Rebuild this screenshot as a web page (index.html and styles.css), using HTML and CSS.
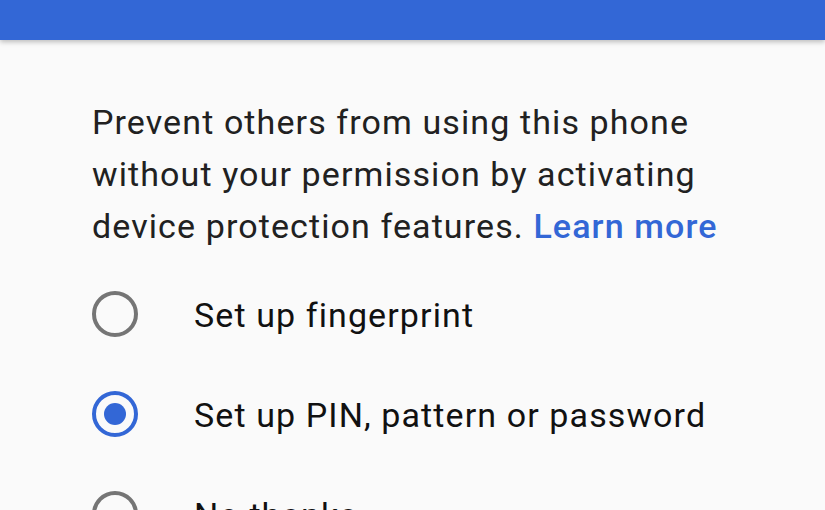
FILE: index.html
```html
<!DOCTYPE html>
<html lang="en">
<head>
    <meta charset="UTF-8">
    <meta name="viewport" content="width=device-width, initial-scale=1.0">
    <title>Device protection</title>
    <link rel="stylesheet" href="styles.css">
</head>
<body>

    <div class="header"></div>

    <div class="content">
        <p class="intro">
            Prevent others from using this phone<br>
            without your permission by activating<br>
            device protection features. <a href="#" class="link">Learn more</a>
        </p>

        <div class="options">
            <div class="option">
                <span class="radio"></span>
                <span class="label">Set up fingerprint</span>
            </div>
            <div class="option">
                <span class="radio checked"></span>
                <span class="label">Set up PIN, pattern or password</span>
            </div>
            <div class="option">
                <span class="radio"></span>
                <span class="label">No thanks</span>
            </div>
        </div>
    </div>

</body>
</html>
```

FILE: styles.css
```css
body {
    font-family: Roboto, 'Noto Sans', sans-serif;
    margin: 0;
    padding: 0;
    background-color: #fafafa;
    color: #212121;
    overflow: hidden;
}

.header {
    height: 40px;
    background-color: #3367d6;
    box-shadow: 0 2px 5px rgba(0, 0, 0, 0.25);
    position: relative;
}

.content {
    padding: 56px 0 0 92px;
}

.intro {
    margin: 0;
    font-size: 34px;
    line-height: 52px;
    letter-spacing: 1.1px;
}

.link {
    color: #3367d6;
    font-weight: 500;
    text-decoration: none;
}

.options {
    margin-top: 12px;
}

.option {
    display: flex;
    align-items: center;
    height: 100px;
}

.radio {
    box-sizing: border-box;
    width: 46px;
    height: 46px;
    border: 4px solid #757575;
    border-radius: 50%;
    display: flex;
    align-items: center;
    justify-content: center;
    flex-shrink: 0;
}

.radio.checked {
    border-color: #3367d6;
}

.radio.checked::after {
    content: "";
    width: 22px;
    height: 22px;
    border-radius: 50%;
    background-color: #3367d6;
}

.label {
    margin-left: 56px;
    font-size: 34px;
    letter-spacing: 1.1px;
    color: #111;
    padding-top: 2px;
}
```
